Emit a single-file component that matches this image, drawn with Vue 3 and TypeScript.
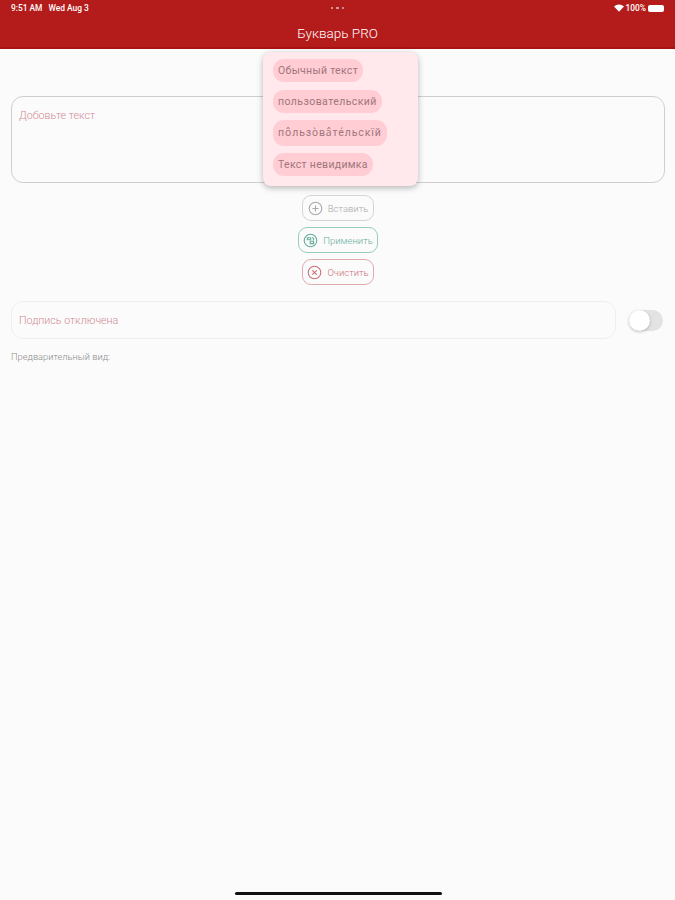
<script setup lang="ts">
import { ref } from 'vue';

const texto = ref('');
const firmaActiva = ref(false);

const estilos = [
  'Обычный текст',
  'пользовательский',
  'по̂льзо̀ва̂те́льскїй',
  'Текст невидимка',
];

const botones = [
  { id: 'insertar', texto: 'Вставить' },
  { id: 'aplicar', texto: 'Применить' },
  { id: 'limpiar', texto: 'Очистить' },
];
</script>

<template>
  <div class="pagina">
    <header class="cabecera">
      <div class="estado">
        <div class="estado-izq">
          <span>9:51 AM</span>
          <span>Wed Aug 3</span>
        </div>
        <div class="puntos"><i></i><i></i><i></i></div>
        <div class="estado-der">
          <svg width="10" height="8" viewBox="0 0 11 8">
            <path d="M0 2.4C3 -.6 8 -.6 11 2.4L5.5 8Z" fill="#fff" />
          </svg>
          <span>100%</span>
          <span class="bateria"></span>
        </div>
      </div>
      <h1>Букварь PRO</h1>
    </header>

    <main class="contenido">
      <div class="zona-texto">
        <textarea v-model="texto" placeholder="Добовьте текст"></textarea>
        <div class="menu">
          <span v-for="estilo in estilos" :key="estilo" class="chip">{{ estilo }}</span>
        </div>
      </div>

      <div class="botones">
        <button v-for="boton in botones" :key="boton.id" class="boton" :class="boton.id">
          <svg v-if="boton.id === 'insertar'" width="15" height="15" viewBox="0 0 15 15">
            <circle cx="7.5" cy="7.5" r="6.3" />
            <path d="M7.5 4.5v6M4.5 7.5h6" />
          </svg>
          <svg v-else-if="boton.id === 'aplicar'" width="15" height="15" viewBox="0 0 15 15">
            <circle cx="7.5" cy="7.5" r="6.3" />
            <path d="M4.3 7.2V4.8h3.4v2.4M5.2 6.6h1.6M7.2 8.2h3.4v2.4H7.2ZM9.4 4.4l1.2 1.4v1.4" />
          </svg>
          <svg v-else width="15" height="15" viewBox="0 0 15 15">
            <circle cx="7.5" cy="7.5" r="6.3" />
            <path d="M5.3 5.3l4.4 4.4M9.7 5.3l-4.4 4.4" />
          </svg>
          <span>{{ boton.texto }}</span>
        </button>
      </div>

      <div class="firma">
        <input class="firma-campo" placeholder="Подпись отключена" disabled />
        <button class="interruptor" :class="{ activo: firmaActiva }" @click="firmaActiva = !firmaActiva">
          <span class="perilla"></span>
        </button>
      </div>

      <p class="vista">Предварительный вид:</p>
    </main>

    <div class="barra-inicio"></div>
  </div>
</template>

<style>
html,
body {
  margin: 0;
  background: #fbfbfb;
}
</style>

<style scoped>
* {
  box-sizing: border-box;
  font-family: Roboto, "Noto Sans", sans-serif;
}

.pagina {
  display: flex;
  flex-direction: column;
  height: 900px;
  background: #fbfbfb;
  overflow: hidden;
}

.cabecera {
  height: 49px;
  background: #b41b1b;
  border-bottom: 2px solid #a91212;
  color: #fff;
  flex: none;
}

.estado {
  display: grid;
  grid-template-columns: 1fr auto 1fr;
  align-items: center;
  height: 16px;
  padding: 0 11px;
  font-size: 8.4px;
  font-weight: 500;
}

.estado-izq {
  display: flex;
  gap: 6px;
}

.puntos {
  display: flex;
  gap: 3px;
}

.puntos i {
  width: 2.5px;
  height: 2.5px;
  border-radius: 50%;
  background: #dcb0b0;
}

.estado-der {
  display: flex;
  justify-content: flex-end;
  align-items: center;
  gap: 2px;
}

.bateria {
  width: 16px;
  height: 7px;
  border-radius: 2px;
  background: #fff;
}

h1 {
  margin: 0;
  padding-top: 4px;
  text-align: center;
  font-size: 13.5px;
  line-height: 27px;
  font-weight: 300;
}

.contenido {
  display: flex;
  flex-direction: column;
  padding: 47px 10px 0 11px;
}

.zona-texto {
  position: relative;
}

textarea {
  display: block;
  width: 654px;
  height: 87px;
  padding: 12px 7px;
  border: 1px solid #cfcfcf;
  border-radius: 12px;
  background: #fbfbfb;
  font-size: 10.7px;
  font-weight: 300;
  resize: none;
  outline: none;
}

textarea::placeholder {
  color: #d08a94;
  opacity: 1;
}

.menu {
  position: absolute;
  left: 252px;
  top: -44px;
  display: flex;
  flex-direction: column;
  align-items: flex-start;
  width: 155px;
  height: 134px;
  padding: 7px 10px;
  gap: 8px;
  border-radius: 8px;
  background: #ffe9ec;
  box-shadow: 0 2px 6px rgba(0, 0, 0, 0.28);
}

.chip {
  height: 23px;
  padding: 0 5px;
  border-radius: 11px;
  background: #ffcdd3;
  color: #a0767c;
  font-size: 10.5px;
  line-height: 23px;
  white-space: nowrap;
  letter-spacing: 0.3px;
}

.chip:nth-child(2) {
  letter-spacing: 0.43px;
}

.chip:nth-child(3) {
  height: 26px;
  line-height: 26px;
  margin: -1px 0;
  letter-spacing: 0.92px;
}

.botones {
  display: flex;
  flex-direction: column;
  align-items: center;
  gap: 6px;
  margin-top: 12px;
}

.boton {
  display: flex;
  align-items: center;
  justify-content: center;
  gap: 5px;
  height: 26px;
  padding: 0;
  border: 1px solid;
  border-radius: 9px;
  background: #fbfbfb;
  font-size: 9.5px;
  font-weight: 300;
}

.boton svg {
  fill: none;
  stroke: currentColor;
  stroke-width: 1.1;
}

.insertar {
  width: 72px;
  border-color: #d4d4d4;
  color: #a9a9a9;
}

.aplicar {
  width: 80px;
  border-color: #9accbe;
  color: #66ad99;
}

.limpiar {
  width: 72px;
  border-color: #e0abb0;
  color: #cc6f77;
}

.firma {
  display: flex;
  align-items: center;
  gap: 13px;
  margin-top: 16px;
}

.firma-campo {
  width: 605px;
  height: 38px;
  padding: 0 7px;
  border: 1px solid #eeeeee;
  border-radius: 12px;
  background: #fbfbfb;
  font-size: 10.7px;
  font-weight: 300;
  outline: none;
}

.firma-campo::placeholder {
  color: #d08a94;
  opacity: 1;
}

.interruptor {
  position: relative;
  width: 34px;
  height: 21px;
  padding: 0;
  border: none;
  border-radius: 11px;
  background: #e3e3e3;
}

.perilla {
  position: absolute;
  left: 0;
  top: 0;
  width: 21px;
  height: 21px;
  border-radius: 50%;
  background: #fff;
  box-shadow: 0 1px 3px rgba(0, 0, 0, 0.25);
}

.interruptor.activo .perilla {
  left: 13px;
}

.vista {
  margin: 12px 0 0;
  color: #8c8c8c;
  font-size: 9.3px;
  line-height: 12px;
  font-weight: 300;
}

.barra-inicio {
  flex: none;
  width: 207px;
  height: 3px;
  margin: auto 233px 5px 235px;
  border-radius: 2px;
  background: #111;
}
</style>
